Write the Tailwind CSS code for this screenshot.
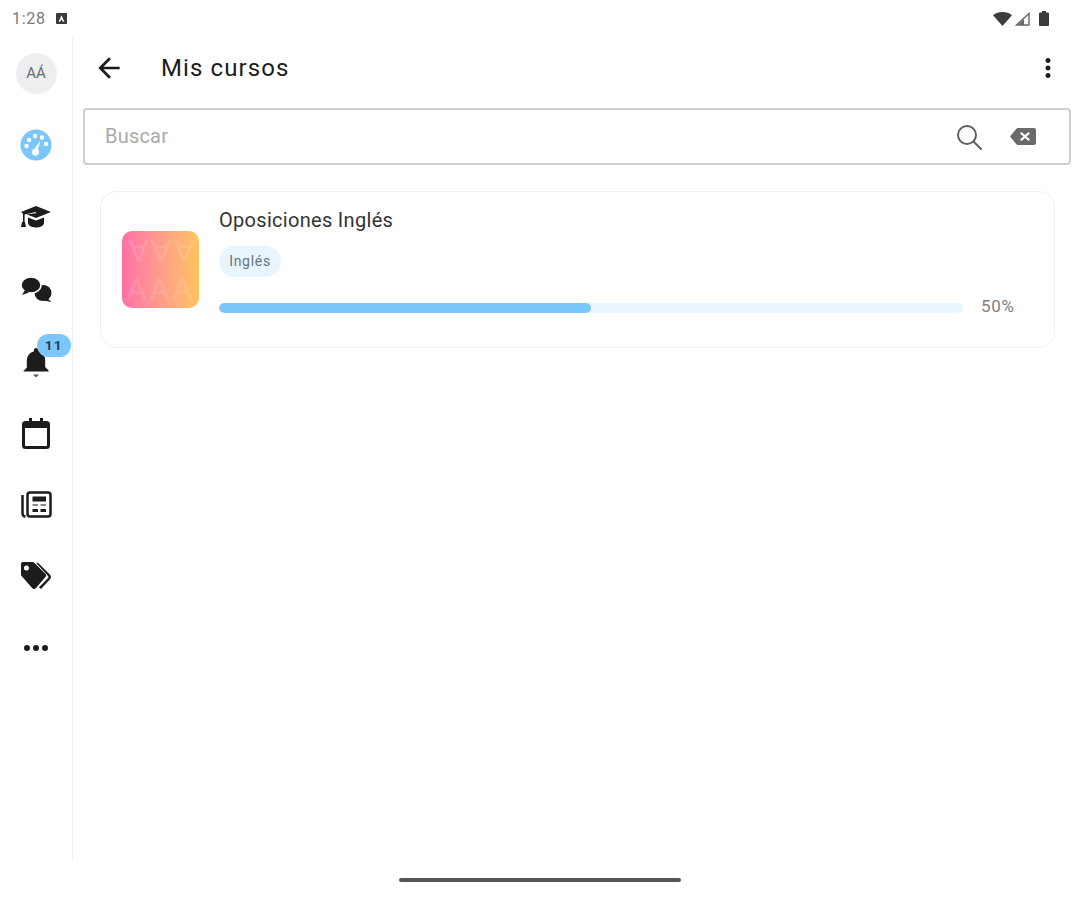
<!DOCTYPE html>
<html lang="es">
<head>
    <meta charset="UTF-8">
    <meta name="viewport" content="width=device-width, initial-scale=1.0">
    <title>Mis cursos</title>
    <script src="https://cdn.jsdelivr.net/npm/@tailwindcss/browser@4"></script>
</head>
<body class="bg-white font-['Roboto',sans-serif] overflow-hidden">
<div class="w-[1079px] h-[900px] flex flex-col">
    <!-- status bar -->
    <div class="h-[37px] shrink-0 flex items-center justify-between pl-[12px] pr-[30px] text-[#7a7a7a]">
        <div class="flex items-center gap-[10px]">
            <span class="text-[16px] leading-none tracking-[0.7px]">1:28</span>
            <svg class="w-[11px] h-[11px]" viewBox="0 0 11 11"><rect width="11" height="11" rx="1" fill="#3a3a3a"/><path d="M5.5 2.2 8.4 8.8H6.9L5.5 6.6 4.1 8.8H2.6z" fill="#fff"/></svg>
        </div>
        <div class="flex items-center gap-[3px]">
            <svg class="w-[19px] h-[14px]" viewBox="0 0 19 14"><path d="M0 3.2C2.6 1 5.9 0 9.5 0S16.4 1 19 3.2L9.5 14z" fill="#3c3c3c"/></svg>
            <svg class="w-[15px] h-[14px]" viewBox="0 0 15 14"><path d="M14 1.5V13H1.5z" fill="none" stroke="#6a6a6a" stroke-width="1.4"/><path d="M9 7v6H2.5z" fill="#6a6a6a"/></svg>
            <svg class="w-[10px] h-[15px] ml-[6px]" viewBox="0 0 10 15"><path d="M3 0h4v1.5h2a1 1 0 0 1 1 1V14a1 1 0 0 1-1 1H1a1 1 0 0 1-1-1V2.5a1 1 0 0 1 1-1h2z" fill="#3c3c3c"/></svg>
        </div>
    </div>

    <div class="flex-1 flex min-h-0">
        <!-- side rail -->
        <nav class="w-[73px] shrink-0 border-r border-[#efefef] flex flex-col items-center">
            <div class="h-[72px] flex items-center justify-center">
                <div class="w-[41px] h-[41px] rounded-full bg-[#eceef0] flex items-center justify-center text-[15px] text-[#666c73]">AÁ</div>
            </div>
            <div class="h-[72px] flex items-center justify-center">
                <svg class="w-[32px] h-[32px]" viewBox="0 0 32 32">
                    <circle cx="16" cy="16" r="15.5" fill="#7cc7fa"/>
                    <g fill="#fff"><circle cx="9" cy="11" r="2.2"/><circle cx="15" cy="7" r="2.2"/><circle cx="22" cy="8.5" r="2.2"/><circle cx="6.5" cy="17" r="2.2"/><circle cx="26" cy="15" r="2.2"/><path d="M20.5 11.2 18 20.5a3.6 3.6 0 1 1-3.2-1z"/></g>
                </svg>
            </div>
            <div class="h-[72px] flex items-center justify-center">
                <svg class="w-[32px] h-[24px]" viewBox="0 0 32 24" fill="#1c1c1c">
                    <path d="M16 1 31 7l-15 6-9.5-3.8L16 8.2 15.6 7 4.6 9.5V17H3V8.8L1 7z"/>
                    <path d="M8 12.500 16 15.500 24 12.500V18c0 2.500-3.600 4.500-8 4.500-2.500 0-4.800-.6-6.300-1.700C9 20 8 19 8 18z"/>
                    <path d="M2 17h3l1 5H1z"/>
                </svg>
            </div>
            <div class="h-[72px] flex items-center justify-center">
                <svg class="w-[31px] h-[25px]" viewBox="0 0 31 25" fill="#1c1c1c">
                    <ellipse cx="22" cy="16" rx="8.500" ry="8"/>
                    <path d="M26 21 30.500 25 23 23.500z"/>
                    <ellipse cx="10" cy="8" rx="10" ry="8" stroke="#fff" stroke-width="1.500"/>
                    <path d="M4 13 1 18 8 15.500z"/>
                </svg>
            </div>
            <div class="h-[72px] flex items-center justify-center relative w-full">
                <svg class="w-[32px] h-[32px] mt-[1px]" viewBox="0 0 32 32" fill="#1c1c1c">
                    <path d="M16 2c1.300 0 2.200 1 2.200 2.200v.6c4.500 1.100 7 5 7 9.700v6.500l3.300 3.200v1.300H3.500V25l3.300-3.200v-6.500c0-4.700 2.500-8.600 7-9.700v-.6C13.800 3 14.700 2 16 2z"/>
                    <path d="M13 28.500h6L16 31.500z" fill="#555"/>
                </svg>
                <span class="absolute left-[37px] top-[9px] w-[34px] h-[23px] rounded-full bg-[#7cc7fa] flex items-center justify-center text-[13px] font-bold tracking-[1.500px] text-[#1d3a4d]">11</span>
            </div>
            <div class="h-[72px] flex items-center justify-center">
                <svg class="w-[28px] h-[31px]" viewBox="0 0 28 31" fill="#1c1c1c">
                    <path d="M7 0h3v3h8V0h3v3h3.500A3.500 3.500 0 0 1 28 6.500v21a3.500 3.500 0 0 1-3.500 3.500h-21A3.500 3.500 0 0 1 0 27.500v-21A3.500 3.500 0 0 1 3.500 3H7zM3 10v17.500a.5.5 0 0 0 .5.5h21a.5.5 0 0 0 .5-.5V10z" fill-rule="evenodd"/>
                </svg>
            </div>
            <div class="h-[71px] flex items-center justify-center">
                <svg class="w-[31px] h-[27px]" viewBox="0 0 31 27">
                    <rect x="6.500" y="1.500" width="23" height="24" rx="2.500" fill="none" stroke="#1c1c1c" stroke-width="2.500"/>
                    <path d="M1.500 4v18c0 2 1 3.500 3 3.500" fill="none" stroke="#1c1c1c" stroke-width="2.500"/>
                    <rect x="11.500" y="5.500" width="13.500" height="5" fill="#1c1c1c"/>
                    <path d="M11.500 13h5.500v2h-5.500zm8 0h5.500v2h-5.500z" fill="#8a8a8a"/>
                    <path d="M11.500 18h5.500v3h-5.500zm8 0h5.500v3h-5.500z" fill="#1c1c1c"/>
                </svg>
            </div>
            <div class="h-[72px] flex items-center justify-center">
                <svg class="w-[31px] h-[28px]" viewBox="0 0 31 28" fill="#1c1c1c">
                    <path d="M2 0h9.500c.7 0 1.300.3 1.800.8l11 11c1 1 1 2.600 0 3.500l-9.500 11c-1 1-2.600 1-3.500 0L.8 14.300c-.5-.5-.8-1.100-.8-1.800V2C0 .9.900 0 2 0zm3.500 3.500a2.500 2.500 0 1 0 0 5 2.500 2.500 0 0 0 0-5z" fill-rule="evenodd"/>
                    <path d="M17 .8 28.800 12.500c1.600 1.600 1.600 3.300 0 5L20 27l-2-1.700 9-9.300c.6-.7.600-1.300 0-2L15 .8z"/>
                </svg>
            </div>
            <div class="h-[72px] flex items-center justify-center gap-[3px]">
                <span class="w-[6px] h-[6px] rounded-full bg-[#1c1c1c]"></span>
                <span class="w-[6px] h-[6px] rounded-full bg-[#1c1c1c]"></span>
                <span class="w-[6px] h-[6px] rounded-full bg-[#1c1c1c]"></span>
            </div>
        </nav>

        <!-- main -->
        <main class="flex-1 min-w-0 pl-[10px] pr-[8px]">
            <header class="h-[61px] flex items-center pl-[10px] pr-[8px]">
                <svg class="w-[32px] h-[32px] shrink-0" viewBox="0 0 24 24" fill="#1c1c1c"><path d="M20 11H7.830l5.590-5.590L12 4l-8 8 8 8 1.410-1.410L7.830 13H20v-2z"/></svg>
                <h1 class="ml-[36px] text-[24px] font-normal tracking-[1.100px] text-[#1c1c1c]">Mis cursos</h1>
                <svg class="w-[30px] h-[30px] ml-auto" viewBox="0 0 24 24" fill="#1c1c1c"><path d="M12 8c1.100 0 2-.9 2-2s-.9-2-2-2-2 .9-2 2 .9 2 2 2zm0 2c-1.100 0-2 .9-2 2s.9 2 2 2 2-.9 2-2-.9-2-2-2zm0 6c-1.100 0-2 .9-2 2s.9 2 2 2 2-.9 2-2-.9-2-2-2z"/></svg>
            </header>

            <div class="mt-[10px] h-[57px] border-2 border-[#cfcfcf] rounded-[4px] flex items-center pl-[20px] pr-[33px]">
                <span class="mb-[2px] text-[20px] tracking-[0.2px] text-[#aaaaaa]">Buscar</span>
                <svg class="w-[28px] h-[28px] ml-auto" viewBox="0 0 28 28" fill="none" stroke="#5f5f5f" stroke-width="2"><circle cx="12" cy="12" r="9"/><path d="m18.500 18.500 7.500 7.500" stroke-linecap="round"/></svg>
                <svg class="w-[26px] h-[17px] ml-[27px]" viewBox="0 0 26 17" fill="#6a6a6a"><path d="M24 0H8c-.7 0-1.200.3-1.600.8L0 8.500l6.400 7.700c.4.500.9.800 1.600.8h16c1.100 0 2-.9 2-2V2c0-1.100-.9-2-2-2zm-4 11.500L18.500 13 15 10l-3.500 3L10 11.500 13.500 8.500 10 5.500 11.500 4 15 7l3.500-3L20 5.500 16.500 8.500z" fill-rule="evenodd"/></svg>
            </div>

            <!-- course card -->
            <article class="mt-[26px] ml-[17px] mr-[16px] h-[157px] border border-[#efefef] rounded-[16px] flex items-center pl-[21px] pr-[39px]">
                <div class="w-[77px] h-[77px] shrink-0 rounded-[10px] bg-gradient-to-r from-[#ff6fa8] to-[#ffc35c] overflow-hidden flex flex-col items-center justify-center leading-[38px] text-[32px] tracking-[2px] text-white/15">
                    <span class="rotate-180 whitespace-nowrap">AAA</span>
                    <span class="whitespace-nowrap">AAA</span>
                </div>
                <div class="flex-1 min-w-0 ml-[20px] mt-[-11px]">
                    <h2 class="text-[20px] leading-[24px] tracking-[0.300px] text-[#333]">Oposiciones Inglés</h2>
                    <span class="mt-[14px] w-[62px] h-[31px] rounded-full bg-[#e8f5fe] flex items-center justify-center text-[14px] tracking-[0.700px] text-[#66747f]">Inglés</span>
                    <div class="mt-[19px] flex items-center">
                        <div class="w-[744px] h-[10px] rounded-full bg-[#e8f5fe] overflow-hidden">
                            <div class="h-full w-1/2 rounded-full bg-[#7cc7fa]"></div>
                        </div>
                        <span class="ml-[18px] mt-[-2px] text-[17px] tracking-[0.700px] text-[#808080]">50%</span>
                    </div>
                </div>
            </article>
        </main>
    </div>

    <!-- gesture bar -->
    <div class="h-[40px] shrink-0 flex items-center justify-center">
        <div class="w-[282px] h-[4px] rounded-full bg-[#555] mt-[-1px]"></div>
    </div>
</div>
</body>
</html>
